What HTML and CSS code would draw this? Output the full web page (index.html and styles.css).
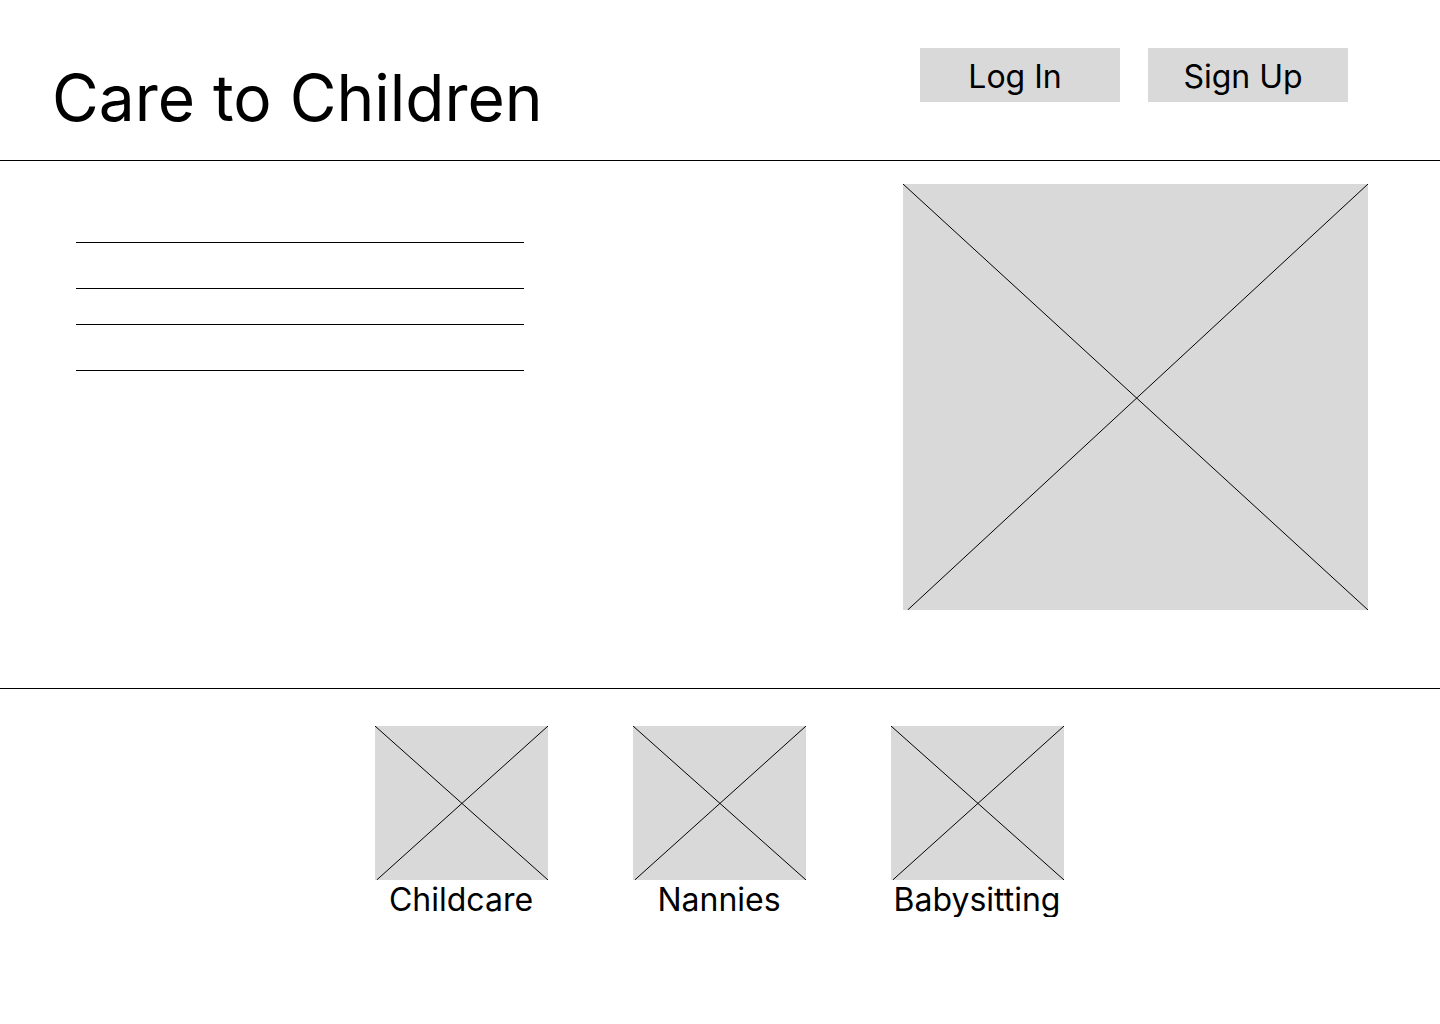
FILE: index.html
```html
<!DOCTYPE html>
<html lang="en">
<head>
    <meta charset="UTF-8">
    <meta name="viewport" content="width=device-width, initial-scale=1.0">
    <title>Care to Children</title>
    <link rel="stylesheet" href="styles.css">
</head>
<body>
    <header class="header">
        <h1 class="title">Care to Children</h1>
        <nav class="nav">
            <button class="nav-btn">Log In</button>
            <button class="nav-btn">Sign Up</button>
        </nav>
    </header>

    <section class="hero">
        <div class="fields">
            <div class="field"></div>
            <div class="field"></div>
        </div>
        <div class="placeholder hero-img">
            <svg viewBox="0 0 100 100" preserveAspectRatio="none">
                <line x1="0" y1="0" x2="100" y2="100" vector-effect="non-scaling-stroke"/>
                <line x1="100" y1="0" x2="1" y2="100" vector-effect="non-scaling-stroke"/>
            </svg>
        </div>
    </section>

    <section class="services">
        <div class="service">
            <div class="placeholder thumb">
                <svg viewBox="0 0 100 100" preserveAspectRatio="none">
                    <line x1="0" y1="0" x2="100" y2="100" vector-effect="non-scaling-stroke"/>
                    <line x1="100" y1="0" x2="1" y2="100" vector-effect="non-scaling-stroke"/>
                </svg>
            </div>
            <p class="service-name">Childcare</p>
        </div>
        <div class="service">
            <div class="placeholder thumb">
                <svg viewBox="0 0 100 100" preserveAspectRatio="none">
                    <line x1="0" y1="0" x2="100" y2="100" vector-effect="non-scaling-stroke"/>
                    <line x1="100" y1="0" x2="1" y2="100" vector-effect="non-scaling-stroke"/>
                </svg>
            </div>
            <p class="service-name">Nannies</p>
        </div>
        <div class="service">
            <div class="placeholder thumb">
                <svg viewBox="0 0 100 100" preserveAspectRatio="none">
                    <line x1="0" y1="0" x2="100" y2="100" vector-effect="non-scaling-stroke"/>
                    <line x1="100" y1="0" x2="1" y2="100" vector-effect="non-scaling-stroke"/>
                </svg>
            </div>
            <p class="service-name">Babysitting</p>
        </div>
    </section>
</body>
</html>
```

FILE: styles.css
```css
body { margin: 0; font-family: Inter, "Liberation Sans", sans-serif; color: #000; background: #fff; }

.header { display: flex; justify-content: space-between; align-items: flex-start; height: 160px; padding: 0 92px 0 52px; border-bottom: 1px solid #000; }
.title { margin: 0; padding-top: 59px; font-size: 64px; font-weight: 400; line-height: 1.21; }
.nav { display: flex; gap: 28px; padding-top: 48px; }
.nav-btn { width: 200px; height: 54px; padding: 3px 10px 0 0; border: none; border-radius: 0; background: #d9d9d9; font-family: inherit; font-size: 32px; color: #000; cursor: pointer; }

.hero { display: flex; justify-content: space-between; align-items: flex-start; padding: 23px 72px 78px 76px; border-bottom: 1px solid #000; }
.fields { width: 448px; margin-top: 58px; }
.field { height: 45px; border-top: 1px solid #000; border-bottom: 1px solid #000; margin-bottom: 35px; }

.placeholder { background: #d9d9d9; }
.placeholder svg { display: block; width: 100%; height: 100%; }
.placeholder line { stroke: #000; stroke-width: 1; }
.hero-img { width: 465px; height: 426px; }

.services { display: flex; justify-content: center; gap: 85px; padding: 37px 2px 0 0; }
.service { width: 173px; text-align: center; }
.thumb { width: 173px; height: 154px; }
.service-name { margin: 0; padding-top: 2px; font-size: 32px; line-height: 1.1; white-space: nowrap; }
```
